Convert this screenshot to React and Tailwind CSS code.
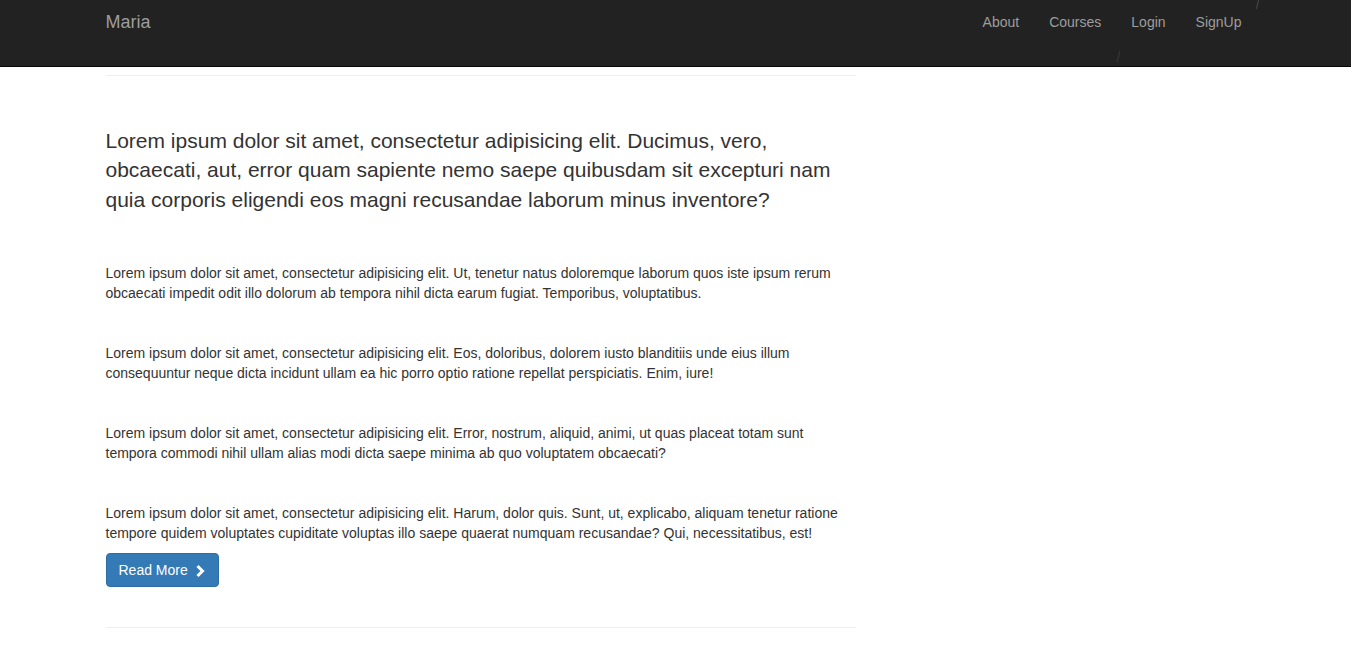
import React from 'react';

const navLinks = ['About', 'Courses', 'Login', 'SignUp'];

const paragraphs = [
  'Lorem ipsum dolor sit amet, consectetur adipisicing elit. Ut, tenetur natus doloremque laborum quos iste ipsum rerum obcaecati impedit odit illo dolorum ab tempora nihil dicta earum fugiat. Temporibus, voluptatibus.',
  'Lorem ipsum dolor sit amet, consectetur adipisicing elit. Eos, doloribus, dolorem iusto blanditiis unde eius illum consequuntur neque dicta incidunt ullam ea hic porro optio ratione repellat perspiciatis. Enim, iure!',
  'Lorem ipsum dolor sit amet, consectetur adipisicing elit. Error, nostrum, aliquid, animi, ut quas placeat totam sunt tempora commodi nihil ullam alias modi dicta saepe minima ab quo voluptatem obcaecati?',
  'Lorem ipsum dolor sit amet, consectetur adipisicing elit. Harum, dolor quis. Sunt, ut, explicabo, aliquam tenetur ratione tempore quidem voluptates cupiditate voluptas illo saepe quaerat numquam recusandae? Qui, necessitatibus, est!',
];

const ChevronRight = () => (
  <svg width="11" height="14" viewBox="0 0 11 14" className="inline-block ml-[7px] relative top-[1px]">
    <path d="M2.5 2 L7.5 7 L2.5 12" fill="none" stroke="white" strokeWidth="3" strokeLinejoin="miter" />
  </svg>
);

const Navbar = () => (
  <header className="relative h-[67px] bg-[#222] border-b border-[#080808]">
    {/* little stray marks seen in the bar */}
    <span className="absolute left-[1257px] top-0 w-px h-[9px] bg-[#4a4a4a] rotate-[15deg]"></span>
    <span className="absolute left-[1118px] top-[51px] w-px h-[11px] bg-[#3a3a3a] rotate-[15deg]"></span>
    <div className="w-[1170px] mx-auto px-[15px] flex items-start justify-between">
      <a className="pt-[12px] text-[18px] leading-[20px] text-[#9d9d9d]">Maria</a>
      <ul className="flex mr-[-11px]">
        {navLinks.map((link) => (
          <li key={link}>
            <a className="block px-[15px] pt-[12px] text-[14px] leading-[20px] text-[#9d9d9d]">{link}</a>
          </li>
        ))}
      </ul>
    </div>
  </header>
);

export default function App() {
  return (
    <div className="min-h-[645px] bg-white text-[#333]" style={{ fontFamily: '"Liberation Sans", Arial, sans-serif' }}>
      <Navbar />
      <main className="w-[1170px] mx-auto px-[15px]">
        <div className="w-[750px] pt-[8px]">
          <hr className="border-t border-[#eee]" />

          <p className="mt-[50px] text-[21px] leading-[29.4px]">
            Lorem ipsum dolor sit amet, consectetur adipisicing elit. Ducimus, vero, obcaecati, aut, error quam sapiente nemo saepe quibusdam sit excepturi nam quia corporis eligendi eos magni recusandae laborum minus inventore?
          </p>

          <div className="mt-[49px] flex flex-col gap-[40px]">
            {paragraphs.map((text, i) => (
              <p key={i} className="text-[14px] leading-[20px]">{text}</p>
            ))}
          </div>

          <button className="mt-[10px] h-[34px] px-[12px] bg-[#337ab7] border border-[#2e6da4] rounded-[4px] text-white text-[14px] leading-[20px] flex items-center">
            Read More
            <ChevronRight />
          </button>

          <hr className="mt-[40px] border-t border-[#eee]" />
        </div>
      </main>
    </div>
  );
}
